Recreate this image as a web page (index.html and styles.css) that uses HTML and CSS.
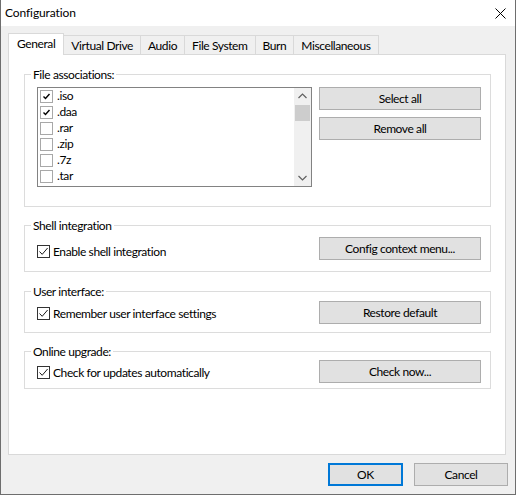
FILE: index.html
```html
<!DOCTYPE html>
<html>
<head>
<meta charset="utf-8">
<title>Configuration</title>
<link rel="stylesheet" href="styles.css">
</head>
<body>
<div class="window">
  <div class="titlebar">
    <span class="title">Configuration</span>
    <svg class="close" width="11" height="11" viewBox="0 0 11 11"><path d="M0.5 0.5L10.5 10.5M10.5 0.5L0.5 10.5" stroke="#000" stroke-width="1" fill="none"/></svg>
  </div>
  <div class="client">
    <div class="tabs">
      <div class="tab active">General</div>
      <div class="tab">Virtual Drive</div>
      <div class="tab">Audio</div>
      <div class="tab">File System</div>
      <div class="tab">Burn</div>
      <div class="tab">Miscellaneous</div>
    </div>
    <div class="panel">
      <fieldset class="group g-assoc">
        <legend>File associations:</legend>
        <div class="assoc-row">
          <div class="listbox">
            <ul class="items">
              <li><span class="lcb"><svg viewBox="0 0 11 11" width="11" height="11"><path d="M2.5 5.5L4.5 7.5L8.5 3" stroke="#000" stroke-width="1.4" fill="none"/></svg></span>.iso</li>
              <li><span class="lcb"><svg viewBox="0 0 11 11" width="11" height="11"><path d="M2.5 5.5L4.5 7.5L8.5 3" stroke="#000" stroke-width="1.4" fill="none"/></svg></span>.daa</li>
              <li><span class="lcb"></span>.rar</li>
              <li><span class="lcb"></span>.zip</li>
              <li><span class="lcb"></span>.7z</li>
              <li><span class="lcb"></span>.tar</li>
            </ul>
            <div class="scrollbar">
              <span class="arrow"><svg width="9" height="6" viewBox="0 0 9 6"><path d="M0.5 5L4.5 1L8.5 5" stroke="#606060" stroke-width="1.2" fill="none"/></svg></span>
              <span class="track"><span class="thumb"></span></span>
              <span class="arrow"><svg width="9" height="6" viewBox="0 0 9 6"><path d="M0.5 1L4.5 5L8.5 1" stroke="#606060" stroke-width="1.2" fill="none"/></svg></span>
            </div>
          </div>
          <div class="btncol">
            <button class="btn wide">Select all</button>
            <button class="btn wide">Remove all</button>
          </div>
        </div>
      </fieldset>

      <fieldset class="group g-shell">
        <legend>Shell integration</legend>
        <div class="opt-row">
          <label class="check c-shell"><span class="cb"><svg viewBox="0 0 11 11" width="11" height="11"><path d="M1.5 5.5L4.2 8.3L9.6 2" stroke="#1a1a1a" stroke-width="1" fill="none"/></svg></span>Enable shell integration</label>
          <button class="btn wide">Config context menu...</button>
        </div>
      </fieldset>

      <fieldset class="group g-ui">
        <legend>User interface:</legend>
        <div class="opt-row">
          <label class="check c-ui"><span class="cb"><svg viewBox="0 0 11 11" width="11" height="11"><path d="M1.5 5.5L4.2 8.3L9.6 2" stroke="#1a1a1a" stroke-width="1" fill="none"/></svg></span>Remember user interface settings</label>
          <button class="btn wide">Restore default</button>
        </div>
      </fieldset>

      <fieldset class="group g-online">
        <legend>Online upgrade:</legend>
        <div class="opt-row">
          <label class="check c-online"><span class="cb"><svg viewBox="0 0 11 11" width="11" height="11"><path d="M1.5 5.5L4.2 8.3L9.6 2" stroke="#1a1a1a" stroke-width="1" fill="none"/></svg></span>Check for updates automatically</label>
          <button class="btn wide">Check now...</button>
        </div>
      </fieldset>
    </div>
    <div class="footer">
      <button class="btn ok default">OK</button>
      <button class="btn cancel">Cancel</button>
    </div>
  </div>
</div>
</body>
</html>
```

FILE: styles.css
```css
* { box-sizing: border-box; }
html, body { margin: 0; padding: 0; background: #f0f0f0; }
body {
  font-family: Lato, "Noto Sans", "Liberation Sans", sans-serif;
  font-size: 12px;
  letter-spacing: -0.4px;
  color: #000;
}
.window {
  width: 516px;
  height: 495px;
  border: 1px solid #6e6e6e;
  border-top: none;
  display: flex;
  flex-direction: column;
  background: #f0f0f0;
}
.titlebar {
  height: 26px;
  flex: none;
  background: #fff;
  display: flex;
  align-items: center;
  justify-content: space-between;
  padding: 0 9px 0 4px;
}
.title { line-height: 16px; letter-spacing: -0.1px; }
.close { display: block; }

.client {
  flex: 1;
  display: flex;
  flex-direction: column;
  padding: 7px 0 0 7px;
}
.tabs {
  display: flex;
  align-items: flex-end;
  height: 21px;
  position: relative;
  z-index: 1;
}
.tab {
  height: 19px;
  padding: 0 7px;
  border: 1px solid #d9d9d9;
  border-bottom: none;
  margin-left: -1px;
  line-height: 19px;
  background: #f0f0f0;
  white-space: nowrap;
}
.tab.active {
  height: 22px;
  margin-left: 0;
  margin-bottom: -1px;
  padding: 0 8px;
  line-height: 19px;
  background: #fff;
  position: relative;
  z-index: 2;
}
.panel {
  width: 498px;
  height: 401px;
  border: 1px solid #d9d9d9;
  background: #fff;
  padding: 12px 14px 0 15px;
  display: flex;
  flex-direction: column;
}

.group {
  margin: 0;
  min-width: 0;
  border: 1px solid #dcdcdc;
  padding: 0 9px 0 12px;
}
.group legend {
  padding: 0 2px;
  margin-left: -6px;
  line-height: 15px;
}
.g-assoc { padding-top: 5px; padding-bottom: 19px; }
.g-shell { margin-top: 11px; padding-top: 4px; padding-bottom: 11px; }
.g-ui { margin-top: 12px; padding-top: 2px; padding-bottom: 8px; }
.g-online { margin-top: 11px; padding-top: 1px; padding-bottom: 5px; }

.assoc-row { display: flex; gap: 7px; }
.listbox {
  width: 275px;
  height: 100px;
  border: 1px solid #828282;
  display: flex;
}
.items {
  list-style: none;
  margin: 0;
  padding: 0;
  flex: 1;
}
.items li {
  height: 16px;
  display: flex;
  align-items: center;
  padding-left: 2px;
  line-height: 16px;
}
.lcb {
  width: 13px;
  height: 13px;
  border: 1px solid #a8a8a8;
  background: #fff;
  margin-right: 4px;
  display: flex;
  align-items: center;
  justify-content: center;
}
.lcb svg { display: block; }
.scrollbar {
  width: 17px;
  background: #f0f0f0;
  display: flex;
  flex-direction: column;
}
.arrow {
  height: 16px;
  display: flex;
  align-items: center;
  justify-content: center;
}
.track { flex: 1; padding: 1px 1px 0 1px; }
.thumb { display: block; height: 16px; background: #cdcdcd; }

.btncol { display: flex; flex-direction: column; gap: 7px; }
.btn {
  height: 23px;
  background: #e1e1e1;
  border: 1px solid #adadad;
  font: inherit;
  letter-spacing: inherit;
  color: #000;
  padding: 0;
  margin: 0;
  border-radius: 0;
}
.wide { width: 162px; }
.ok { width: 75px; }
.cancel { width: 94px; }
.default { border: 2px solid #0078d7; }

.opt-row {
  display: flex;
  justify-content: space-between;
  align-items: flex-start;
}
.check {
  display: flex;
  align-items: center;
  height: 14px;
}
.c-shell { margin-top: 7px; }
.c-ui { margin-top: 5px; }
.c-online { margin-top: 5px; }
.cb {
  width: 13px;
  height: 13px;
  border: 1px solid #333;
  background: #fff;
  margin-right: 3px;
  display: flex;
  align-items: center;
  justify-content: center;
}
.cb svg { display: block; }

.footer {
  display: flex;
  justify-content: flex-end;
  gap: 11px;
  padding: 8px 7px 0 0;
}
```
